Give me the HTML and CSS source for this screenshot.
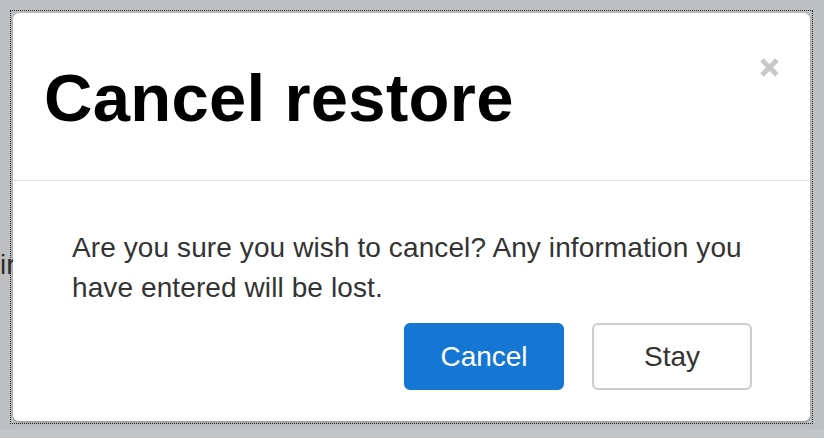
FILE: index.html
```html
<!DOCTYPE html>
<html lang="en">
<head>
<meta charset="utf-8">
<title>Cancel restore</title>
<link rel="stylesheet" href="styles.css">
</head>
<body>
<div class="backdrop-text">ir</div>
<div class="focus-frame">
  <div class="dialog" role="dialog" aria-labelledby="dlg-title">
    <div class="dialog-header">
      <h1 class="dialog-title" id="dlg-title">Cancel restore</h1>
      <button class="close-btn" aria-label="Close">
        <svg width="21" height="21" viewBox="0 0 21 21" aria-hidden="true">
          <path d="M3 3 L18 18 M18 3 L3 18" stroke="#c9c9c9" stroke-width="5" fill="none"/>
        </svg>
      </button>
    </div>
    <div class="dialog-body">
      <p class="dialog-text">Are you sure you wish to cancel? Any information you have entered will be lost.</p>
      <div class="dialog-actions">
        <button class="btn btn-primary">Cancel</button>
        <button class="btn btn-default">Stay</button>
      </div>
    </div>
  </div>
</div>
</body>
</html>
```
FILE: styles.css
```css
html, body {
  margin: 0;
  padding: 0;
}
body {
  width: 824px;
  height: 438px;
  overflow: hidden;
  position: relative;
  background: linear-gradient(#bebfc1 0, #bebfc1 429px, #c3c4c6 429px);
  font-family: "Liberation Sans", Arial, sans-serif;
}
.backdrop-text {
  position: absolute;
  left: 0;
  top: 245px;
  font-size: 28px;
  line-height: 40px;
  color: #2e2e2e;
}
.focus-frame {
  position: relative;
  margin: 10px 0 0 10px;
  width: 797px;
  height: 408px;
  padding: 2px;
  border: 1px dotted #222;
}
.dialog {
  width: 797px;
  height: 408px;
  background: #fff;
  border-radius: 6px;
  box-shadow: 0 1px 3px rgba(0, 0, 0, 0.28);
  display: flex;
  flex-direction: column;
}
.dialog-header {
  display: flex;
  align-items: flex-start;
  padding: 51px 30px 49px 31px;
  border-bottom: 1px solid #e5e5e5;
}
.dialog-title {
  flex: 1;
  margin: 0;
  font-size: 67px;
  line-height: 67px;
  font-weight: bold;
  color: #000;
  letter-spacing: 0.3px;
}
.close-btn {
  margin-top: -7px;
  padding: 0;
  border: 0;
  background: none;
  width: 21px;
  height: 21px;
  display: flex;
}
.dialog-body {
  padding: 47px 58px 30px 59px;
  display: flex;
  flex-direction: column;
}
.dialog-text {
  margin: 0;
  font-size: 28px;
  line-height: 40px;
  color: #333;
  letter-spacing: 0.1px;
}
.dialog-actions {
  margin-top: 15px;
  display: flex;
  justify-content: flex-end;
  gap: 28px;
}
.btn {
  width: 160px;
  height: 67px;
  border-radius: 6px;
  font-family: "Liberation Sans", Arial, sans-serif;
  font-size: 28px;
  display: flex;
  align-items: center;
  justify-content: center;
  padding: 0;
}
.btn-primary {
  background: #1577d3;
  border: 2px solid #1577d3;
  color: #fff;
}
.btn-default {
  background: #fff;
  border: 2px solid #cccccc;
  color: #333;
}
```
